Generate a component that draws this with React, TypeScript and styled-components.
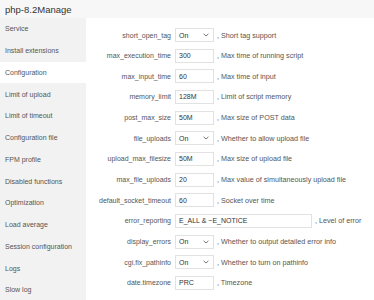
import React from "react";
import styled, { createGlobalStyle } from "styled-components";

const Global = createGlobalStyle`
  html, body { margin: 0; padding: 0; background: #fff; }
  body { font-family: "Liberation Sans", Arial, sans-serif; color: #333; }
  * { box-sizing: border-box; }
`;

const Page = styled.div`
  width: 374px;
  height: 300px;
  overflow: hidden;
  display: flex;
  flex-direction: column;
`;

const Header = styled.div`
  height: 18px;
  flex: none;
  background: #f7f7f7;
  display: flex;
  align-items: center;
  padding-left: 5px;
  font-size: 9.5px;
  color: #333;
`;

const Body = styled.div`
  flex: 1;
  display: flex;
  min-height: 0;
`;

const Sidebar = styled.div`
  width: 86px;
  flex: none;
  background: #f2f2f2;
  display: flex;
  flex-direction: column;
`;

const NavItem = styled.div<{ $active?: boolean }>`
  height: 21.75px;
  flex: none;
  display: flex;
  align-items: center;
  padding-left: 5px;
  font-size: 7px;
  color: #555;
  background: ${(p) => (p.$active ? "#fff" : "transparent")};
  white-space: nowrap;
`;

const Content = styled.div`
  flex: 1;
  padding-top: 10px;
  display: flex;
  flex-direction: column;
`;

const Row = styled.div`
  height: 14px;
  margin-bottom: 6.67px;
  display: flex;
  align-items: center;
  flex: none;
`;

const Label = styled.div`
  width: 89px;
  padding-right: 4px;
  text-align: right;
  font-size: 7px;
  color: #555;
  white-space: nowrap;
`;

const Field = styled.div<{ $wide?: boolean }>`
  width: ${(p) => (p.$wide ? "137px" : "39px")};
  height: 14px;
  border: 1px solid #e2e2e2;
  background: #fff;
  display: flex;
  align-items: center;
  justify-content: space-between;
  padding: 0 3px 0 3px;
  font-size: 7px;
  color: #333;
  flex: none;
`;

const Desc = styled.div`
  margin-left: 3px;
  font-size: 7.2px;
  color: #555;
  white-space: nowrap;
`;

const Chevron = () => (
  <svg width="6" height="4" viewBox="0 0 6 4" style={{ marginRight: 1 }}>
    <path d="M0.6 0.8 L3 3 L5.4 0.8" stroke="#666" strokeWidth="0.9" fill="none" />
  </svg>
);

type R = { label: string; value: string; desc: string; select?: boolean; wide?: boolean };

const rows: R[] = [
  { label: "short_open_tag", value: "On", desc: ", Short tag support", select: true },
  { label: "max_execution_time", value: "300", desc: ", Max time of running script" },
  { label: "max_input_time", value: "60", desc: ", Max time of input" },
  { label: "memory_limit", value: "128M", desc: ", Limit of script memory" },
  { label: "post_max_size", value: "50M", desc: ", Max size of POST data" },
  { label: "file_uploads", value: "On", desc: ", Whether to allow upload file", select: true },
  { label: "upload_max_filesize", value: "50M", desc: ", Max size of upload file" },
  { label: "max_file_uploads", value: "20", desc: ", Max value of simultaneously upload file" },
  { label: "default_socket_timeout", value: "60", desc: ", Socket over time" },
  { label: "error_reporting", value: "E_ALL & ~E_NOTICE", desc: ", Level of error", wide: true },
  { label: "display_errors", value: "On", desc: ", Whether to output detailed error info", select: true },
  { label: "cgi.fix_pathinfo", value: "On", desc: ", Whether to turn on pathinfo", select: true },
  { label: "date.timezone", value: "PRC", desc: ", Timezone" },
];

const nav = [
  "Service",
  "Install extensions",
  "Configuration",
  "Limit of upload",
  "Limit of timeout",
  "Configuration file",
  "FPM profile",
  "Disabled functions",
  "Optimization",
  "Load average",
  "Session configuration",
  "Logs",
  "Slow log",
];

export default function App() {
  return (
    <Page>
      <Global />
      <Header>php-8.2Manage</Header>
      <Body>
        <Sidebar>
          {nav.map((n) => (
            <NavItem key={n} $active={n === "Configuration"}>
              {n}
            </NavItem>
          ))}
        </Sidebar>
        <Content>
          {rows.map((r) => (
            <Row key={r.label}>
              <Label>{r.label}</Label>
              <Field $wide={r.wide}>
                <span>{r.value}</span>
                {r.select && <Chevron />}
              </Field>
              <Desc>{r.desc}</Desc>
            </Row>
          ))}
        </Content>
      </Body>
    </Page>
  );
}
